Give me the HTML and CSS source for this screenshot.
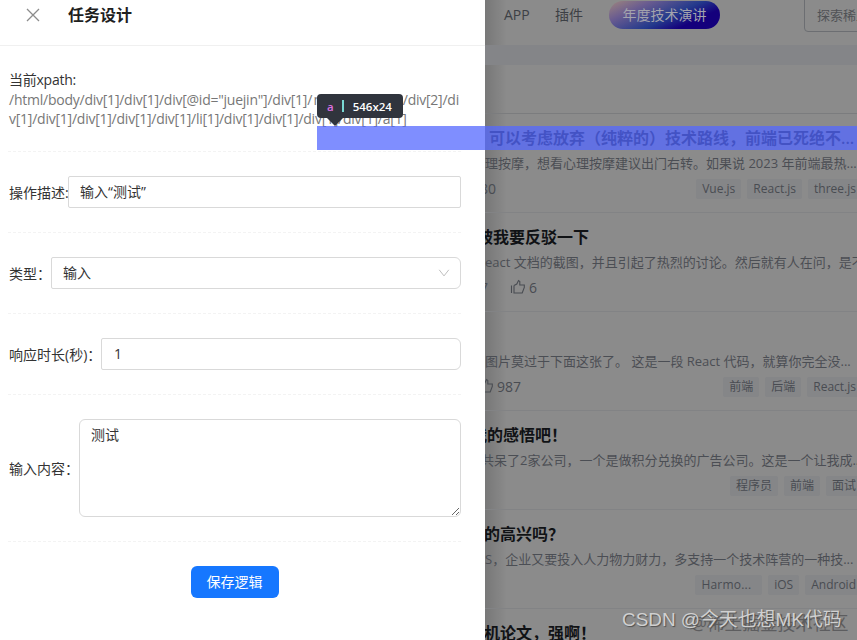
FILE: index.html
```html
<!DOCTYPE html>
<html lang="zh-CN">
<head>
    <meta charset="UTF-8">
    <meta name="viewport" content="width=device-width, initial-scale=1.0">
    <title>任务设计</title>
    <link rel="stylesheet" href="styles.css">
</head>
<body>
    <div class="page">
        <div class="drawer">
            <div class="drawer-header">
                <svg class="close" width="14" height="14" viewBox="0 0 14 14"><path d="M1 1L13 13M13 1L1 13"/></svg>
                <h1>任务设计</h1>
            </div>
            <div class="drawer-body">
                <div class="xpath">
                    <div class="xpath-label">当前xpath:</div>
                    <div class="xpath-line line-one"><span>/html/body/div[1]/div[1]/div[@id="juejin"]/div[1]/</span><span>main[1]/div[1]</span><span>/div[2]/di</span></div>
                    <div class="xpath-line line-two">v[1]/div[1]/div[1]/div[1]/div[1]/li[1]/div[1]/div[1]/div[1]/div[1]/a[1]</div>
                </div>
                <div class="row">
                    <label class="label-desc">操作描述:</label>
                    <input class="square" type="text" value="输入“测试”">
                </div>
                <div class="row">
                    <label class="label-type">类型：</label>
                    <div class="select">
                        <span>输入</span>
                        <svg width="12" height="12" viewBox="0 0 12 12"><path d="M1.2 2.8L6 8.9L10.8 2.8"/></svg>
                    </div>
                </div>
                <div class="row">
                    <label class="label-time">响应时长(秒)：</label>
                    <input class="number" type="text" value="1">
                </div>
                <div class="row">
                    <label class="label-content">输入内容：</label>
                    <textarea>测试</textarea>
                </div>
                <div class="actions">
                    <button>保存逻辑</button>
                </div>
            </div>
        </div>

        <div class="site">
            <div class="nav">
                <span class="nav-app">APP</span>
                <span class="nav-plugin">插件</span>
                <span class="nav-badge">年度技术演讲</span>
                <div class="search">探索稀土掘金</div>
            </div>
            <div class="feed">
                <div class="feed-tabs"></div>
                <div class="entry">
                    <h2 class="shift-1">可以考虑放弃（纯粹的）技术路线，前端已死绝不...</h2>
                    <p class="shift-2">理按摩，想看心理按摩建议出门右转。如果说 2023 年前端最热...</p>
                    <div class="entry-footer">
                        <span class="likes cut-1">80</span>
                        <div class="tags"><span>Vue.js</span><span>React.js</span><span>three.js</span></div>
                    </div>
                </div>
                <div class="entry">
                    <h2 class="shift-3">被我要反驳一下</h2>
                    <p class="shift-4">React 文档的截图，并且引起了热烈的讨论。然后就有人在问，是不是</p>
                    <div class="entry-footer">
                        <span class="likes cut-2">7</span>
                        <span class="likes thumb"><svg width="16" height="16" viewBox="0 0 16 16"><path d="M1.5 6.5V14M4 6.5V14H12.2L14.3 8.5V6H9.8V2.5L8.5 1.5L6.8 5L4 6.5"/></svg>6</span>
                    </div>
                </div>
                <div class="entry">
                    <h2></h2>
                    <p class="shift-5">图片莫过于下面这张了。 这是一段 React 代码，就算你完全没...</p>
                    <div class="entry-footer">
                        <span class="likes cut-3"><svg width="16" height="16" viewBox="0 0 16 16"><path d="M1.5 6.5V14M4 6.5V14H12.2L14.3 8.5V6H9.8V2.5L8.5 1.5L6.8 5L4 6.5"/></svg>987</span>
                        <div class="tags"><span>前端</span><span>后端</span><span>React.js</span></div>
                    </div>
                </div>
                <div class="entry">
                    <h2 class="shift-6">我的感悟吧！</h2>
                    <p class="shift-7">共呆了2家公司，一个是做积分兑换的广告公司。这是一个让我成...</p>
                    <div class="entry-footer">
                        <div class="tags"><span>程序员</span><span>前端</span><span>面试</span></div>
                    </div>
                </div>
                <div class="entry">
                    <h2 class="shift-8">的高兴吗？</h2>
                    <p class="shift-9">S，企业又要投入人力物力财力，多支持一个技术阵营的一种技...</p>
                    <div class="entry-footer">
                        <div class="tags"><span class="tag-wide">Harmo...</span><span>iOS</span><span>Android</span></div>
                    </div>
                </div>
                <div class="entry">
                    <h2 class="shift-8">机论文，强啊！</h2>
                </div>
            </div>
        </div>

        <!-- element inspector overlay -->
        <div class="highlight"></div>
        <div class="tooltip"><span class="tag-name">a</span><i></i><span>546x24</span></div>

        <div class="watermark watermark-back">@稀土掘金技术社区</div>
        <div class="watermark watermark-front">CSDN @今天也想MK代码</div>
    </div>
</body>
</html>
```
FILE: styles.css
```css
* {
    box-sizing: border-box;
}
body {
    margin: 0;
    font-family: "Open Sans", "Noto Sans CJK SC", sans-serif;
    font-size: 14px;
    color: #333;
}
.page {
    position: relative;
    display: flex;
    width: 857px;
    height: 640px;
    overflow: hidden;
}
.drawer {
    width: 485px;
    flex: none;
    background: #fff;
}
.drawer-header {
    display: flex;
    align-items: center;
    height: 46px;
    padding: 0 26px 15px;
    border-bottom: 1px solid #f0f0f0;
}
.close {
    fill: none;
    stroke: #8c8c8c;
    stroke-width: 1.3;
}
h1 {
    margin: 0 0 0 28px;
    font-size: 16px;
    line-height: 24px;
    font-weight: 600;
    color: #1f1f1f;
}
.drawer-body {
    padding: 24px 24px 0 8px;
}
.xpath {
    height: 82px;
    padding-left: 1px;
    line-height: 19px;
    border-bottom: 1px dashed #f3f3f3;
}
.xpath-label {
    line-height: 20px;
    letter-spacing: -0.25px;
}
.xpath-line {
    display: flex;
    justify-content: space-between;
    letter-spacing: -0.24px;
    color: #777;
    white-space: nowrap;
}
.line-one {
    width: 450px;
}
.line-two {
    width: 398px;
}
.row {
    display: flex;
    align-items: center;
    padding: 24px 0;
    border-bottom: 1px dashed #f3f3f3;
}
.row label {
    flex: none;
    padding-left: 1px;
    white-space: nowrap;
}
.label-desc {
    width: 60px;
}
.label-type {
    width: 43px;
}
.label-time {
    width: 93px;
}
.label-content {
    width: 71px;
}
input, textarea, .select {
    flex: 1;
    min-width: 0;
    height: 32px;
    padding: 4px 11px;
    border: 1px solid #d9d9d9;
    border-radius: 6px;
    background: #fff;
    font: inherit;
    line-height: 22px;
    color: #333;
}
input {
    padding: 3px 11px 5px;
}
input, .select {
    border-top-left-radius: 2px;
    border-bottom-left-radius: 2px;
}
.square {
    border-radius: 2px;
}
.number {
    padding-left: 12px;
}
.select {
    display: flex;
    align-items: center;
    justify-content: space-between;
    padding: 0 10px 0 11px;
}
.select svg {
    fill: none;
    stroke: #bfbfbf;
}
textarea {
    height: 98px;
    resize: vertical;
}
.actions {
    display: flex;
    justify-content: center;
    padding-top: 24px;
}
button {
    width: 88px;
    height: 32px;
    padding: 0 0 2px;
    border: none;
    border-radius: 6px;
    background: #1677ff;
    font: inherit;
    color: #fff;
}

/* page behind the drawer, under the mask */
.site {
    flex: 1;
    min-width: 0;
    overflow: hidden;
    background: linear-gradient(90deg, rgba(0, 0, 0, 0.14), transparent 22px) #8b8b8b;
}
.nav {
    display: flex;
    height: 45px;
    padding-left: 19px;
    line-height: 30px;
    color: #3d4045;
    white-space: nowrap;
}
.nav span {
    flex: none;
}
.nav-app {
    width: 51px;
}
.nav-plugin {
    width: 54px;
}
.nav-badge {
    width: 111px;
    height: 28px;
    margin-top: 1px;
    border-radius: 14px;
    background: linear-gradient(155deg, #9a827f 2%, #6a5c90 25%, #243a8c 55%, #14007c 75%);
    color: #a3a3ad;
    text-align: center;
    line-height: 28px;
}
.search {
    flex: none;
    width: 120px;
    height: 38px;
    margin: -6px 0 0 84px;
    padding: 5px 0 0 12px;
    border: 1px solid #6c6e72;
    border-radius: 4px;
    font-size: 13px;
    color: #505256;
}
.feed {
    border-top: 20px solid #848588;
}
.feed-tabs {
    height: 49px;
    border-bottom: 1px solid #7b7c7e;
}
.entry {
    height: 99px;
    padding-top: 12px;
    border-bottom: 1px solid #828385;
    white-space: nowrap;
}
h2 {
    height: 24px;
    margin: 0;
    font-size: 16px;
    line-height: 24px;
    font-weight: 600;
    color: #101215;
}
p {
    margin: 2px 0 0;
    font-size: 13px;
    line-height: 22px;
    color: #4b4e54;
}
.entry-footer {
    display: flex;
    align-items: center;
    height: 26px;
    margin-top: 1px;
    color: #494c52;
}
.likes {
    display: flex;
    align-items: center;
    gap: 3px;
}
.likes svg {
    fill: none;
    stroke: #494c52;
    stroke-width: 1.1;
}
.tags {
    display: flex;
    gap: 6px;
    margin: 1px -5px 0 auto;
}
.tags span {
    padding: 0 6px;
    border-radius: 2px;
    background: #858688;
    font-size: 12px;
    line-height: 20px;
}
.tags .tag-wide {
    padding-right: 11px;
    letter-spacing: 0.2px;
}

/* rows slide under the left edge */
.shift-1 { margin-left: 4px; }
.shift-2 { margin-left: 0; }
.shift-3 { margin-left: -8px; }
.shift-4 { margin-left: -8px; }
.shift-5 { margin-left: 0; }
.shift-6 { margin-left: -14px; }
.shift-7 { margin-left: -4px; }
.shift-8 { margin-left: -1px; }
.shift-9 { margin-left: 0; }
.cut-1 { margin-left: -5px; }
.cut-2 { margin-left: -5px; }
.cut-3 { margin-left: -7px; }
.thumb { margin-left: 22px; }

.highlight {
    position: absolute;
    left: 317px;
    top: 126px;
    width: 540px;
    height: 24px;
    background: rgba(84, 104, 255, 0.75);
}
.tooltip {
    position: absolute;
    left: 317px;
    top: 94px;
    display: flex;
    align-items: center;
    width: 86px;
    height: 24px;
    padding-left: 10px;
    border-radius: 4px;
    background: #30343d;
    font-size: 11.5px;
    font-weight: 600;
    color: #fff;
}
.tooltip::after {
    content: "";
    position: absolute;
    left: 10px;
    top: 24px;
    border: 8px solid transparent;
    border-top-color: #30343d;
    border-bottom: none;
}
.tooltip .tag-name {
    color: #d96fe0;
}
.tooltip i {
    width: 2px;
    height: 12px;
    margin: 0 9px 0 8px;
    background: #79d8d3;
}
.watermark {
    position: absolute;
    white-space: nowrap;
}
.watermark-back {
    left: 691px;
    top: 610px;
    font-size: 17.7px;
    line-height: 26px;
    color: #5d5d5f;
}
.watermark-front {
    left: 622px;
    top: 607px;
    font-family: "Liberation Sans", "Noto Sans CJK SC", sans-serif;
    font-size: 18.9px;
    line-height: 26px;
    color: #d0d0d0;
    text-shadow: 1px 1px 1px #505050;
}
```
